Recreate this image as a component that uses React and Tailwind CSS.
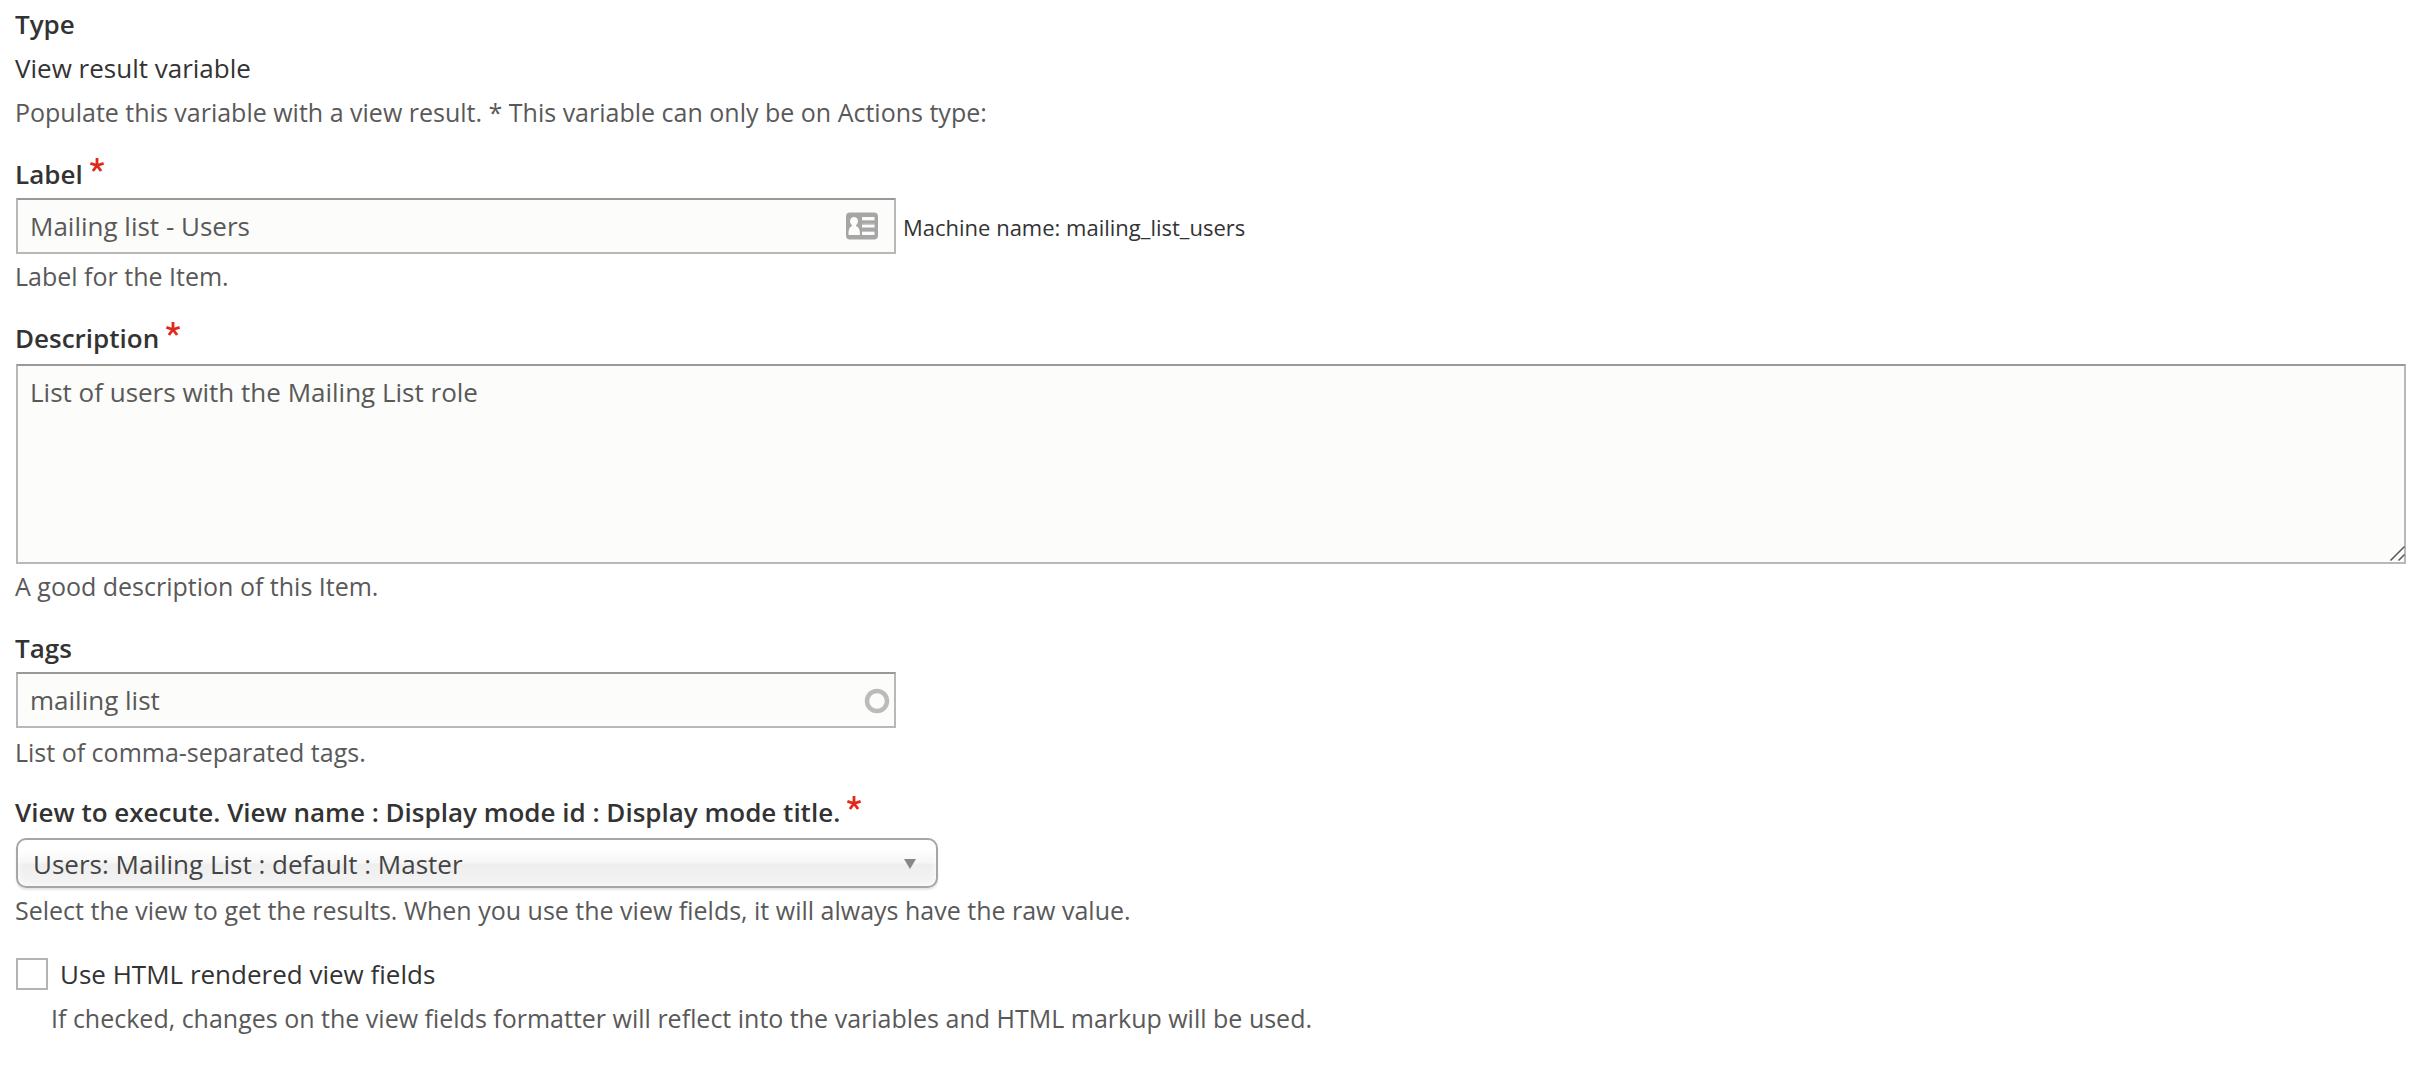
const labelClass = "flex items-start text-[26px] leading-9 font-semibold text-[#333]";
const helpClass = "text-[25px] leading-9 text-[#595959]";
const fieldClass =
  "block w-full rounded-none border-2 border-[#b8b8b8] border-t-[#999] bg-[#fcfcfa] px-3 text-[26px] leading-9 text-[#595959] outline-none";

function RequiredMark() {
  return (
    <svg
      className="mt-0.5 ml-[7px] h-3.5 w-3.5"
      viewBox="0 0 14 14"
      fill="none"
      stroke="#e0291b"
      strokeWidth="2.800"
      aria-hidden="true"
    >
      <path d="M7 7.500V0M7 7.500.4 5.300M7 7.500l6.600-2.200M7 7.500 2.900 13M7 7.500 11.100 13" />
    </svg>
  );
}

function Label({ htmlFor, required, children }) {
  return (
    <label htmlFor={htmlFor} className={labelClass}>
      {children}
      {required && <RequiredMark />}
    </label>
  );
}

function ContactCardIcon() {
  return (
    <svg
      className="pointer-events-none absolute top-3.5 right-[18px] h-7 w-8"
      viewBox="0 0 32 28"
      aria-hidden="true"
    >
      <rect x="0" y="0.500" width="32" height="27" rx="4" fill="#a6a6a6" />
      <ellipse cx="8" cy="9.300" rx="4" ry="4.300" fill="#fcfcfa" />
      <path
        d="M6 12.500h4v1.500c3 1.200 4 4 4 9H2.500c0-5 .7-7.800 3.500-9z"
        fill="#fcfcfa"
      />
      <path d="M16 5h12.500v3H16zM16 12.500h12.500v3H16zM16 20h12.500v3H16z" fill="#fcfcfa" />
      <path d="M16 8h12.500v1H16zM16 11.500h12.500v1H16zM16 19h12.500v1H16z" fill="#c4c4c4" />
    </svg>
  );
}

export default function App() {
  return (
    <form className="bg-white pt-1.5 pr-[19px] pb-8 pl-[15px] font-['Open_Sans',sans-serif] text-[26px] leading-9 text-[#333]">
      <section className="flex flex-col gap-2">
        <h2 className="font-semibold">Type</h2>
        <p>View result variable</p>
        <p className={helpClass}>
          Populate this variable with a view result. * This variable can only be on Actions type:
        </p>
      </section>

      <section className="mt-[26px]">
        <Label htmlFor="label" required>Label</Label>
        <div className="mx-px mt-1.5 flex items-center gap-[7px]">
          <div className="relative w-[880px] max-w-full">
            <input
              id="label"
              type="text"
              required
              defaultValue="Mailing list - Users"
              className={`${fieldClass} h-14`}
            />
            <ContactCardIcon />
          </div>
          <span className="pt-0.5 text-[22px] leading-7">Machine name: mailing_list_users</span>
        </div>
        <p className={`${helpClass} mt-1`}>Label for the Item.</p>
      </section>

      <section className="mt-[26px]">
        <Label htmlFor="description" required>Description</Label>
        <div className="relative mx-px mt-2">
          <textarea
            id="description"
            required
            defaultValue="List of users with the Mailing List role"
            className={`${fieldClass} h-[200px] resize-none py-2`}
          />
          <svg
            className="pointer-events-none absolute right-px bottom-[3px] h-4 w-4"
            viewBox="0 0 16 16"
            fill="none"
            stroke="#555"
            strokeWidth="1.500"
            aria-hidden="true"
          >
            <path d="M1.500 15.500 15.500 1.500M9.500 15.500l6-6" />
          </svg>
        </div>
        <p className={`${helpClass} mt-1`}>A good description of this Item.</p>
      </section>

      <section className="mt-[26px]">
        <Label htmlFor="tags">Tags</Label>
        <div className="relative mx-px mt-1.5 w-[880px] max-w-full">
          <input
            id="tags"
            type="text"
            defaultValue="mailing list"
            className={`${fieldClass} h-14`}
          />
          <svg
            className="pointer-events-none absolute top-4 right-1.5 h-[26px] w-[26px]"
            viewBox="0 0 26 26"
            aria-hidden="true"
          >
            <circle cx="13" cy="13" r="10" fill="#fcfcfa" stroke="#bbb" strokeWidth="4.500" />
          </svg>
        </div>
        <p className={`${helpClass} mt-1.5`}>List of comma-separated tags.</p>
      </section>

      <section className="mt-6">
        <Label htmlFor="view" required>
          View to execute. View name : Display mode id : Display mode title.
        </Label>
        <div className="relative mx-px mt-2 w-[922px] max-w-full">
          <select
            id="view"
            required
            defaultValue="users"
            className="block h-[50px] w-full appearance-none rounded-[10px] border-2 border-[#a6a6a6] bg-linear-[to_bottom,#ffffff_20%,#f6f6f6_50%,#eeeeee_52%,#f4f4f4_100%] px-[15px] pt-px text-[26px] leading-9 text-[#444] shadow-[inset_0_0_6px_#ffffff,0_2px_2px_rgba(0,0,0,0.1)] outline-none"
          >
            <option value="users">Users: Mailing List : default : Master</option>
          </select>
          <svg
            className="pointer-events-none absolute top-5 right-[22px] h-3 w-3"
            viewBox="0 0 12 12"
            aria-hidden="true"
          >
            <path d="M0 1h12L6 11z" fill="#888" />
          </svg>
        </div>
        <p className={`${helpClass} mt-1`}>
          Select the view to get the results. When you use the view fields, it will always have the raw value.
        </p>
      </section>

      <section className="mt-7">
        <div className="flex items-center gap-3 pl-px">
          <input
            id="html"
            type="checkbox"
            className="h-8 w-8 appearance-none rounded-none border-2 border-[#b3b3b3] bg-white checked:bg-[#888]"
          />
          <label htmlFor="html">Use HTML rendered view fields</label>
        </div>
        <p className={`${helpClass} mt-2 pl-9`}>
          If checked, changes on the view fields formatter will reflect into the variables and HTML markup will be used.
        </p>
      </section>
    </form>
  );
}
